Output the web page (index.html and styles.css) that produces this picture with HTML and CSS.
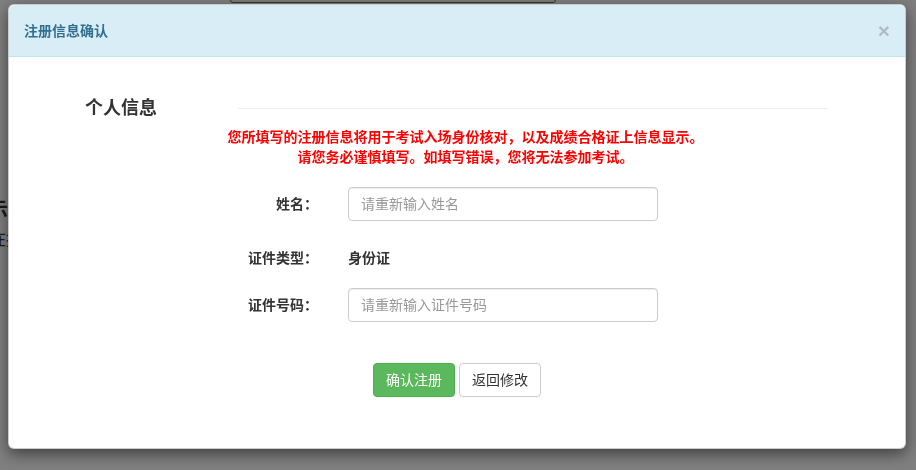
FILE: index.html
```html
<!DOCTYPE html>
<html lang="zh-CN">
<head>
    <meta charset="UTF-8">
    <meta name="viewport" content="width=device-width, initial-scale=1.0">
    <title>注册信息确认</title>
    <link rel="stylesheet" href="styles.css">
</head>
<body>
    <div class="page">
        <div class="page-bar"></div>
        <h3 class="page-title">提示</h3>
        <p class="page-text">现在报名</p>
    </div>
    <div class="backdrop"></div>

    <div class="modal">
        <div class="modal-content">
            <div class="modal-header">
                <h4 class="modal-title">注册信息确认</h4>
                <button type="button" class="close">&times;</button>
            </div>
            <div class="modal-body">
                <div class="section-head">
                    <h4 class="section-title">个人信息</h4>
                    <div class="section-line"></div>
                </div>
                <p class="notice">
                    您所填写的注册信息将用于考试入场身份核对，以及成绩合格证上信息显示。<br>
                    请您务必谨慎填写。如填写错误，您将无法参加考试。
                </p>
                <form id="confirmForm">
                    <div class="form-row">
                        <label for="realName">姓名：</label>
                        <input type="text" id="realName" placeholder="请重新输入姓名">
                    </div>
                    <div class="form-row static">
                        <label>证件类型：</label>
                        <span class="static-value">身份证</span>
                    </div>
                    <div class="form-row">
                        <label for="idNumber">证件号码：</label>
                        <input type="text" id="idNumber" placeholder="请重新输入证件号码">
                    </div>
                    <div class="form-actions">
                        <button type="submit" class="btn btn-success">确认注册</button>
                        <button type="button" class="btn btn-default">返回修改</button>
                    </div>
                </form>
            </div>
        </div>
    </div>
</body>
</html>
```

FILE: styles.css
```css
html, body {
    height: 100%;
}

body {
    font-family: "Liberation Sans", "Noto Sans CJK SC", sans-serif;
    font-size: 14px;
    line-height: 20px;
    margin: 0;
    color: #333;
    background-color: #fff;
    overflow: hidden;
}

.page {
    position: relative;
    padding-top: 196px;
}

.page-bar {
    position: absolute;
    top: -20px;
    left: 230px;
    width: 324px;
    height: 21px;
    border: 1px solid #5a7a5a;
    border-radius: 3px;
    background: #fafafa;
}

.page-title {
    margin: 0 0 6px -32px;
    font-size: 20px;
    line-height: 28px;
}

.page-text {
    margin: 0 0 0 -26px;
    font-size: 16px;
}

.backdrop {
    position: fixed;
    inset: 0;
    background-color: rgba(0, 0, 0, 0.5);
}

.modal {
    position: fixed;
    top: 4px;
    left: 8px;
    width: 898px;
}

.modal-content {
    background: #fff;
    border: 1px solid rgba(0, 0, 0, 0.2);
    border-radius: 6px;
    box-shadow: 0 5px 15px rgba(0, 0, 0, 0.5);
}

.modal-header {
    display: flex;
    justify-content: space-between;
    align-items: center;
    padding: 15px;
    background-color: #d9edf7;
    border-bottom: 1px solid #bce8f1;
    border-radius: 6px 6px 0 0;
}

.modal-title {
    margin: 0;
    font-size: 14px;
    font-weight: bold;
    color: #31708f;
}

.close {
    padding: 0;
    border: none;
    background: transparent;
    font-family: "Liberation Sans", sans-serif;
    font-size: 21px;
    font-weight: bold;
    line-height: 1;
    color: #000;
    opacity: 0.2;
    cursor: pointer;
}

.modal-body {
    padding: 36px 0 51px;
}

.section-head {
    display: grid;
    grid-template-columns: 229px 1fr;
    align-items: center;
    padding-right: 77px;
    height: 30px;
}

.section-title {
    margin: 0;
    padding-left: 76px;
    font-size: 18px;
    font-weight: bold;
}

.section-line {
    border-top: 1px solid #eee;
}

.notice {
    margin: 4px 0 0;
    padding-left: 17px;
    text-align: center;
    color: #f00;
    font-weight: bold;
}

.form-row {
    display: grid;
    grid-template-columns: 309px 310px;
    column-gap: 30px;
    align-items: center;
    margin-top: 20px;
}

.form-row.static {
    margin-top: 27px;
}

.form-row label {
    text-align: right;
    font-weight: bold;
}

.form-row input {
    box-sizing: border-box;
    height: 34px;
    padding: 6px 12px;
    font-family: inherit;
    font-size: 14px;
    color: #555;
    border: 1px solid #ccc;
    border-radius: 4px;
    box-shadow: inset 0 1px 1px rgba(0, 0, 0, 0.075);
}

.form-row input::placeholder {
    color: #999;
}

.static-value {
    font-weight: bold;
}

.form-actions {
    display: flex;
    justify-content: center;
    gap: 4px;
    margin-top: 41px;
}

.btn {
    padding: 6px 12px;
    font-family: inherit;
    font-size: 14px;
    line-height: 20px;
    border: 1px solid transparent;
    border-radius: 4px;
    cursor: pointer;
}

.btn-success {
    color: #fff;
    background-color: #5cb85c;
    border-color: #4cae4c;
}

.btn-default {
    color: #333;
    background-color: #fff;
    border-color: #ccc;
}
```
